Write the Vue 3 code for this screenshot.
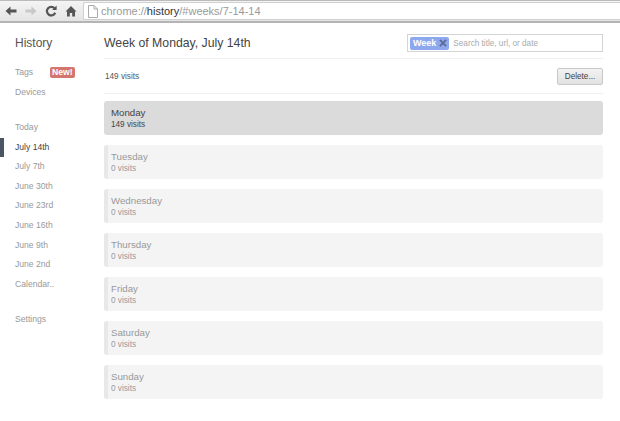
<script setup>
const navTop = ['Tags', 'Devices']
const weeks = [
  { label: 'Today' },
  { label: 'July 14th', active: true },
  { label: 'July 7th' },
  { label: 'June 30th' },
  { label: 'June 23rd' },
  { label: 'June 16th' },
  { label: 'June 9th' },
  { label: 'June 2nd' },
  { label: 'Calendar..' }
]
const days = [
  { name: 'Monday', visits: 149 },
  { name: 'Tuesday', visits: 0 },
  { name: 'Wednesday', visits: 0 },
  { name: 'Thursday', visits: 0 },
  { name: 'Friday', visits: 0 },
  { name: 'Saturday', visits: 0 },
  { name: 'Sunday', visits: 0 }
]
</script>

<template>
  <div class="window">
    <div class="toolbar">
      <svg class="tool" width="14" height="14" viewBox="0 0 14 14"><path d="M1.5 7 L6.5 2.5 V5.5 H12.5 V8.5 H6.5 V11.5 Z" fill="#555"/></svg>
      <svg class="tool" width="14" height="14" viewBox="0 0 14 14"><path d="M12.5 7 L7.5 2.5 V5.5 H1.5 V8.5 H7.5 V11.5 Z" fill="#c8c8c8"/></svg>
      <svg class="tool" width="14" height="14" viewBox="0 0 14 14"><path d="M10.6 4.4 A4.3 4.3 0 1 0 11.2 8.8" fill="none" stroke="#555" stroke-width="2.2"/><path d="M8.2 6 H12.6 V1.6 Z" fill="#555"/></svg>
      <svg class="tool" width="14" height="14" viewBox="0 0 14 14"><path d="M7 2 L12.5 7.5 H11 V12.5 H8.2 V9 H5.8 V12.5 H3 V7.5 H1.5 Z" fill="#555"/></svg>
      <div class="omnibox">
        <svg width="10" height="13" viewBox="0 0 10 13"><path d="M.5 .5 H6 L9.5 4 V12.5 H.5 Z M6 .5 V4 H9.5" fill="#fff" stroke="#aaa"/></svg>
        <span class="url">chrome://<b>history</b>/#weeks/7-14-14</span>
      </div>
    </div>

    <div class="page">
      <aside class="sidebar">
        <h1>History</h1>
        <ul class="nav top">
          <li v-for="item in navTop" :key="item">
            {{ item }}
            <span v-if="item === 'Tags'" class="new">New!</span>
          </li>
        </ul>
        <ul class="nav weeks">
          <li v-for="w in weeks" :key="w.label" :class="{ active: w.active }">{{ w.label }}</li>
        </ul>
        <ul class="nav settings">
          <li>Settings</li>
        </ul>
      </aside>

      <main class="content">
        <header class="head">
          <h2>Week of Monday, July 14th</h2>
          <div class="search">
            <span class="chip">Week
              <svg class="chip-x" width="8" height="8" viewBox="0 0 9 9"><path d="M1 1 L8 8 M8 1 L1 8" stroke="#5c6a96" stroke-width="2"/></svg>
            </span>
            <span class="placeholder">Search title, url, or date</span>
          </div>
        </header>
        <div class="summary">
          <span>149 visits</span>
          <button class="delete">Delete...</button>
        </div>
        <div class="days">
          <div v-for="d in days" :key="d.name" class="day" :class="{ filled: d.visits > 0 }">
            <div class="day-name">{{ d.name }}</div>
            <div class="day-visits">{{ d.visits }} visits</div>
          </div>
        </div>
      </main>
    </div>
  </div>
</template>

<style scoped>
.window {
  width: 620px;
  height: 421px;
  overflow: hidden;
  background: #fff;
  font-family: "Liberation Sans", Arial, sans-serif;
  color: #444;
}

.toolbar {
  box-sizing: border-box;
  height: 23px;
  display: flex;
  align-items: center;
  gap: 6px;
  padding: 0 0 0 4px;
  background: linear-gradient(#f4f4f4, #e4e4e4);
  border-top: 1px solid #bbb;
  border-bottom: 2px solid #b4b4b4;
}

.tool {
  flex: none;
}

.omnibox {
  flex: 1;
  height: 18px;
  box-sizing: border-box;
  margin-left: -1px;
  display: flex;
  align-items: center;
  gap: 3px;
  padding-left: 4px;
  background: #fff;
  border: 1px solid #d0d0d0;
  border-right: none;
  border-radius: 2px 0 0 2px;
}

.url {
  font-size: 11px;
  color: #9a9a9a;
}

.url b {
  font-weight: 400;
  color: #333;
}

.page {
  display: flex;
}

.sidebar {
  width: 104px;
  flex: none;
  padding-top: 13px;
}

.sidebar h1 {
  margin: 0 0 12px 15px;
  font-size: 12px;
  font-weight: 400;
  line-height: 15px;
  color: #555;
}

.nav {
  list-style: none;
  margin: 0;
  padding: 0;
}

.nav li {
  height: 19.6px;
  line-height: 19.6px;
  padding-left: 15px;
  font-size: 8.6px;
  color: #999;
}

.top li {
  height: 19.5px;
  line-height: 19.5px;
}

.new {
  display: inline-block;
  margin-left: 14px;
  padding: 0 2.5px;
  height: 11px;
  line-height: 11px;
  border-radius: 2px;
  background: #d4766e;
  color: #fff;
  font-weight: 700;
}

.weeks {
  margin-top: 16px;
}

.weeks .active {
  color: #444;
  border-left: 4px solid #4b5563;
  padding-left: 11px;
}

.settings {
  margin-top: 16px;
}

.content {
  width: 499px;
  flex: none;
}

.head {
  height: 36px;
  display: flex;
  align-items: center;
  justify-content: space-between;
  padding-top: 5px;
  box-sizing: border-box;
  border-bottom: 1px solid #f0f0f0;
}

.head h2 {
  margin: 0;
  font-size: 12.25px;
  font-weight: 400;
  color: #444;
}

.search {
  box-sizing: border-box;
  width: 196px;
  height: 18px;
  display: flex;
  align-items: center;
  gap: 4px;
  padding-left: 2px;
  border: 1px solid #d4d4d4;
}

.chip {
  display: flex;
  align-items: center;
  gap: 3px;
  height: 13px;
  line-height: 13px;
  padding: 0 2px 0 3px;
  border-radius: 2px;
  background: #8ea8ee;
  color: #fff;
  font-size: 9px;
  font-weight: 700;
}

.chip-x {
  flex: none;
}

.placeholder {
  font-size: 8.2px;
  color: #aaa;
}

.summary {
  height: 34px;
  display: flex;
  align-items: center;
  justify-content: space-between;
  padding-left: 1px;
  border-bottom: 1px solid #f0f0f0;
  font-size: 8.2px;
  color: #555;
}

.delete {
  box-sizing: border-box;
  width: 46px;
  height: 17px;
  padding: 0;
  border: 1px solid #c8c8c8;
  border-radius: 2px;
  background: linear-gradient(#f2f2f2, #e2e2e2);
  font-family: inherit;
  font-size: 8.2px;
  color: #444;
}

.days {
  display: flex;
  flex-direction: column;
  gap: 10px;
  padding-top: 7px;
}

.day {
  box-sizing: border-box;
  height: 34px;
  padding: 6px 0 0 3px;
  border-left: 4px solid #e8e8e8;
  border-radius: 3px;
  background: #f4f4f4;
  color: #999;
}

.day.filled {
  border-left-color: #dbdbdb;
  background: #dbdbdb;
  color: #444;
}

.day-name {
  font-size: 9.7px;
  line-height: 12px;
}

.day-visits {
  font-size: 8.2px;
  line-height: 12px;
}
</style>
